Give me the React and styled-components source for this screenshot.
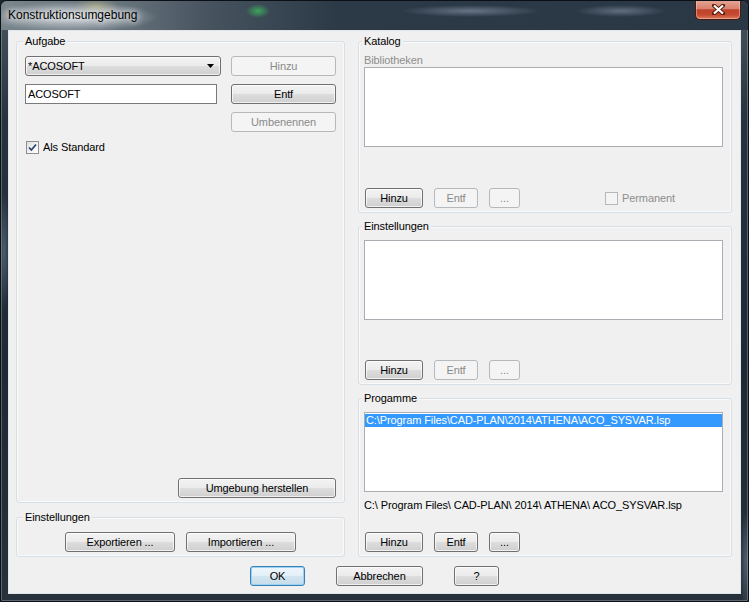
import styled, { createGlobalStyle } from "styled-components";

const GlobalStyle = createGlobalStyle`
  html, body { margin: 0; padding: 0; background: #1b2530; }
  body {
    font-family: "Liberation Sans", Arial, sans-serif;
    font-size: 11px;
    letter-spacing: -0.1px;
    color: #000;
  }
  * { box-sizing: border-box; }
`;

const Window = styled.div`
  width: 749px;
  height: 602px;
  display: flex;
  flex-direction: column;
  padding: 0 7px 7px;
  border: 1px solid #0b1016;
  border-radius: 7px 7px 2px 2px;
  overflow: hidden;
  background:
    radial-gradient(ellipse 6px 60px at 3px 250px, rgba(120, 140, 160, 0.5), transparent),
    radial-gradient(ellipse 6px 50px at 745px 560px, rgba(120, 140, 160, 0.5), transparent),
    linear-gradient(180deg, #4a5761 0%, #26323d 20%, #1e2935 60%, #27313b 100%);
  box-shadow: inset 0 0 0 1px rgba(190, 200, 210, 0.35);
`;

const TitleBar = styled.div`
  height: 29px;
  margin: 0 -7px;
  padding: 0 7px;
  display: flex;
  align-items: flex-start;
  justify-content: space-between;
  background:
    radial-gradient(ellipse 85px 15px at 72px 16px, rgba(220, 226, 230, 0.9), rgba(220, 226, 230, 0)),
    radial-gradient(ellipse 22px 10px at 95px 6px, rgba(205, 195, 120, 0.5), transparent),
    radial-gradient(ellipse 12px 7px at 257px 10px, rgba(60, 175, 90, 0.9), transparent),
    radial-gradient(ellipse 70px 6px at 470px 10px, rgba(150, 165, 185, 0.55), transparent),
    radial-gradient(ellipse 45px 6px at 620px 10px, rgba(150, 165, 185, 0.5), transparent),
    linear-gradient(90deg, #78848b 0%, #6b7780 14%, #46535f 28%, #2c3a47 45%, #2a3845 100%);
`;

const Title = styled.span`
  margin-top: 7px;
  font-size: 12px;
  letter-spacing: 0;
  color: #000;
  text-shadow: 0 0 6px #fff, 0 0 10px rgba(255, 255, 255, 0.8);
`;

const CloseButton = styled.div`
  width: 46px;
  height: 20px;
  margin-top: -1px;
  display: flex;
  align-items: center;
  justify-content: center;
  border: 1px solid #4a1a12;
  border-top: none;
  border-radius: 0 0 5px 5px;
  background: linear-gradient(180deg, #e7a796 0%, #d7826e 45%, #c0412b 52%, #c44a32 78%, #de7d5d 100%);
  box-shadow: inset 0 0 0 1px rgba(255, 210, 200, 0.45);
`;

const Client = styled.div`
  flex: 1;
  display: flex;
  flex-direction: column;
  padding: 10px 7px 7px;
  background: #f0f0f0;
  border: 1px solid #dfe5ea;
`;

const Main = styled.div`
  display: grid;
  grid-template-columns: 329px 374px;
  column-gap: 13px;
  height: 516px;
`;

const Column = styled.div`
  display: flex;
  flex-direction: column;
  gap: ${(p) => p.$gap}px;
`;

/* group box: the caption sits on the top border line */
const Group = styled.section`
  height: ${(p) => p.$h}px;
  padding: 0 8px 4px ${(p) => p.$pl}px;
  border: 1px solid #d5dfe5;
  border-radius: 3px;
  box-shadow: inset 0 0 0 1px rgba(255, 255, 255, 0.6);
  display: flex;
  flex-direction: column;
`;

const Legend = styled.div`
  align-self: flex-start;
  height: 14px;
  line-height: 14px;
  margin: -8px 0 ${(p) => p.$mb}px -2px;
  padding: 0 2px;
  background: #f0f0f0;
`;

const TaskGrid = styled.div`
  display: grid;
  grid-template-columns: 196px 105px;
  grid-auto-rows: 20px;
  column-gap: 10px;
  row-gap: 8px;
`;

const Button = styled.button`
  height: 20px;
  width: ${(p) => p.$w}px;
  flex-shrink: 0;
  padding: 0;
  font: inherit;
  letter-spacing: inherit;
  color: ${(p) => (p.disabled ? "#8a8a8a" : "#000")};
  border: 1px solid ${(p) => (p.disabled ? "#b5b9bc" : p.$default ? "#3c7fb1" : "#707070")};
  border-radius: 3px;
  background: ${(p) =>
    p.disabled
      ? "#f4f4f4"
      : p.$default
      ? "linear-gradient(180deg, #eef6fb 0%, #e3eff7 50%, #d3e5f1 52%, #c6dcea 100%)"
      : "linear-gradient(180deg, #f3f3f3 0%, #ebebeb 50%, #dddddd 52%, #cfcfcf 100%)"};
  box-shadow: ${(p) =>
    p.disabled
      ? "none"
      : p.$default
      ? "inset 0 0 0 1px #98d3f5"
      : "inset 0 0 0 1px rgba(255, 255, 255, 0.7)"};
  cursor: default;
`;

const Combo = styled.div`
  height: 20px;
  display: flex;
  align-items: center;
  justify-content: space-between;
  padding: 0 6px 0 2px;
  border: 1px solid #707070;
  border-radius: 3px;
  background: linear-gradient(180deg, #f3f3f3 0%, #ebebeb 50%, #dddddd 52%, #cfcfcf 100%);
  box-shadow: inset 0 0 0 1px rgba(255, 255, 255, 0.7);
`;

const TextBox = styled.input`
  width: 192px;
  height: 20px;
  padding: 0 2px;
  font: inherit;
  letter-spacing: inherit;
  color: #000;
  background: #fff;
  border: 1px solid #7a7a7a;
  outline: none;
`;

const CheckRow = styled.label`
  display: flex;
  align-items: center;
  gap: 4px;
  height: 14px;
  margin-left: 1px;
  color: ${(p) => (p.$disabled ? "#8d8d8d" : "#000")};
`;

const CheckBox = styled.span`
  width: 13px;
  height: 13px;
  display: flex;
  align-items: center;
  justify-content: center;
  border: 1px solid ${(p) => (p.$disabled ? "#b7b7b7" : "#8e8f8f")};
  background: ${(p) =>
    p.$disabled ? "#f4f4f4" : "linear-gradient(135deg, #dcdcdc 0%, #f6f6f6 60%, #ffffff 100%)"};
`;

const BottomRight = styled.div`
  margin-top: auto;
  display: flex;
  justify-content: flex-end;
`;

const CenterRow = styled.div`
  display: flex;
  justify-content: center;
  gap: 11px;
`;

const ButtonRow = styled.div`
  margin-top: auto;
  padding-left: 1px;
  display: flex;
  align-items: center;
  gap: 11px;
`;

const Spacer = styled.div`
  width: 62px;
`;

const Caption = styled.div`
  height: 13px;
  line-height: 13px;
  color: #8d8d8d;
`;

const ListBox = styled.div`
  height: 80px;
  padding: 1px 0 0;
  background: #fff;
  border: 1px solid #abadb3;
`;

const ListItem = styled.div`
  height: 13px;
  line-height: 13px;
  padding: 0 1px;
  background: ${(p) => (p.$selected ? "#3399ff" : "transparent")};
  color: ${(p) => (p.$selected ? "#fff" : "#000")};
  white-space: nowrap;
`;

const PathText = styled.div`
  margin-top: 7px;
  height: 13px;
  line-height: 13px;
  white-space: nowrap;
`;

const Footer = styled.div`
  margin-top: 9px;
  display: flex;
  justify-content: center;
  gap: 31px;
`;

const Check = () => (
  <svg width="9" height="9" viewBox="0 0 9 9">
    <path d="M1 4.5 L3.4 7 L8 1.5" fill="none" stroke="#2d4370" strokeWidth="1.8" />
  </svg>
);

const Arrow = () => (
  <svg width="7" height="4" viewBox="0 0 7 4">
    <path d="M0 0 H7 L3.5 4 Z" fill="#000" />
  </svg>
);

const CloseX = () => (
  <svg width="13" height="11" viewBox="0 0 13 11">
    <path
      d="M2 1.5 L11 9.5 M11 1.5 L2 9.5"
      stroke="#5a1d12"
      strokeWidth="4"
      strokeLinecap="square"
    />
    <path d="M2 1.5 L11 9.5 M11 1.5 L2 9.5" stroke="#fff" strokeWidth="2.2" />
  </svg>
);

const ListButtons = ({ active }) => (
  <>
    <Button $w={58}>Hinzu</Button>
    <Button $w={44} disabled={!active}>
      Entf
    </Button>
    <Button $w={31} disabled={!active}>
      ...
    </Button>
  </>
);

export default function App() {
  const path = "C:\\Program Files\\CAD-PLAN\\2014\\ATHENA\\ACO_SYSVAR.lsp";
  return (
    <>
      <GlobalStyle />
      <Window>
        <TitleBar>
          <Title>Konstruktionsumgebung</Title>
          <CloseButton>
            <CloseX />
          </CloseButton>
        </TitleBar>
        <Client>
          <Main>
            <Column $gap={14}>
              <Group $h={462} $pl={8}>
                <Legend $mb={8}>Aufgabe</Legend>
                <TaskGrid>
                  <Combo>
                    <span>*ACOSOFT</span>
                    <Arrow />
                  </Combo>
                  <Button $w={105} disabled>
                    Hinzu
                  </Button>
                  <TextBox readOnly defaultValue="ACOSOFT" />
                  <Button $w={105}>Entf</Button>
                  <span />
                  <Button $w={105} disabled>
                    Umbenennen
                  </Button>
                  <CheckRow>
                    <CheckBox>
                      <Check />
                    </CheckBox>
                    Als Standard
                  </CheckRow>
                </TaskGrid>
                <BottomRight>
                  <Button $w={158}>Umgebung herstellen</Button>
                </BottomRight>
              </Group>
              <Group $h={40} $pl={8}>
                <Legend $mb={8}>Einstellungen</Legend>
                <CenterRow>
                  <Button $w={110}>Exportieren ...</Button>
                  <Button $w={110}>Importieren ...</Button>
                </CenterRow>
              </Group>
            </Column>
            <Column $gap={13}>
              <Group $h={172} $pl={5}>
                <Legend $mb={6}>Katalog</Legend>
                <Caption>Bibliotheken</Caption>
                <ListBox />
                <ButtonRow>
                  <ListButtons />
                  <Spacer />
                  <CheckRow $disabled>
                    <CheckBox $disabled />
                    Permanent
                  </CheckRow>
                </ButtonRow>
              </Group>
              <Group $h={159} $pl={5}>
                <Legend $mb={7}>Einstellungen</Legend>
                <ListBox />
                <ButtonRow>
                  <ListButtons />
                </ButtonRow>
              </Group>
              <Group $h={159} $pl={5}>
                <Legend $mb={7}>Progamme</Legend>
                <ListBox>
                  <ListItem $selected>{path}</ListItem>
                </ListBox>
                <PathText>C:\ Program Files\ CAD-PLAN\ 2014\ ATHENA\ ACO_SYSVAR.lsp</PathText>
                <ButtonRow>
                  <ListButtons active />
                </ButtonRow>
              </Group>
            </Column>
          </Main>
          <Footer>
            <Button $w={55} $default>
              OK
            </Button>
            <Button $w={87}>Abbrechen</Button>
            <Button $w={45}>?</Button>
          </Footer>
        </Client>
      </Window>
    </>
  );
}
